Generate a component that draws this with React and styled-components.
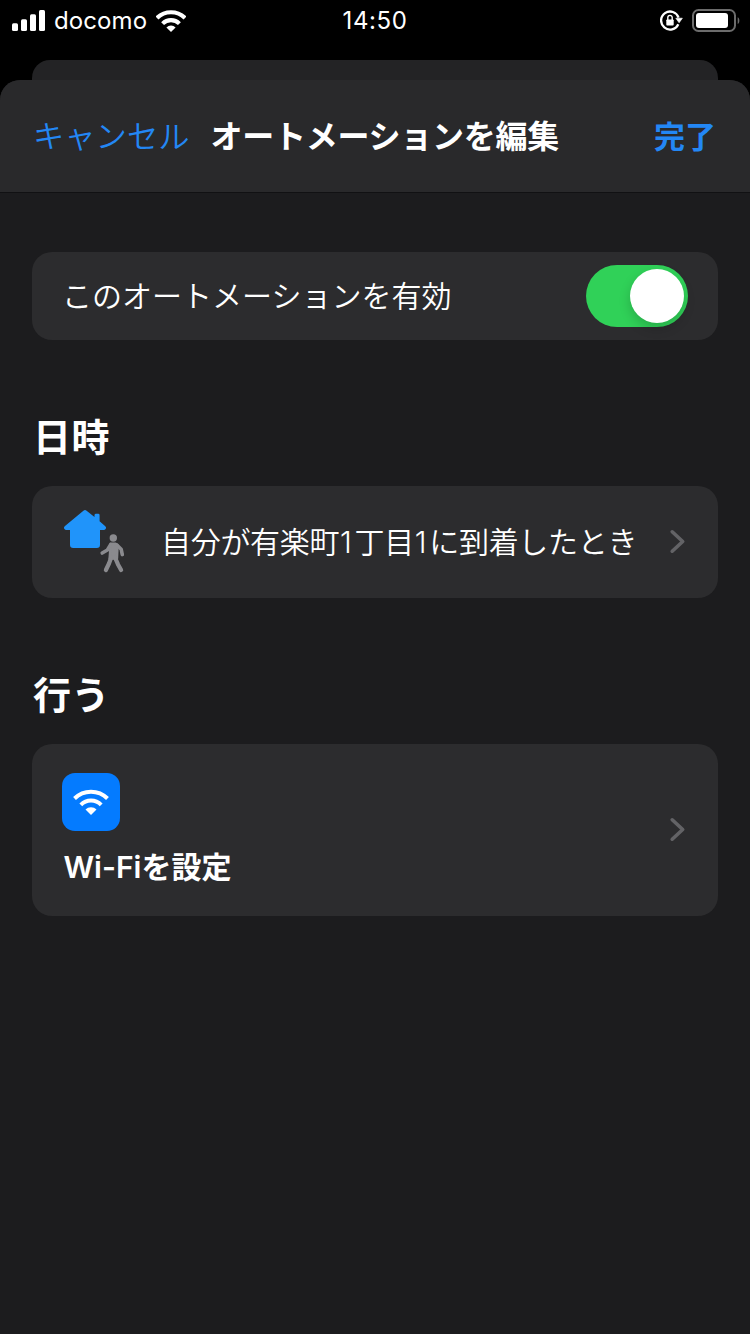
import React from "react";
import styled, { createGlobalStyle } from "styled-components";

const GlobalStyle = createGlobalStyle`
  * { box-sizing: border-box; }
  html, body { margin: 0; background: #000; }
  body { font-family: Inter, "Noto Sans CJK JP", sans-serif; color: #fff; }
`;

const Screen = styled.div`
  width: 750px;
  height: 1334px;
  display: flex;
  flex-direction: column;
  background: #000;
  overflow: hidden;
`;

const StatusBar = styled.header`
  height: 60px;
  padding: 0 10px 20px 12px;
  display: grid;
  grid-template-columns: 1fr auto 1fr;
  align-items: center;
  font-size: 24px;
  line-height: 40px;
`;

const StatusGroup = styled.div`
  display: flex;
  align-items: center;
  justify-content: ${(p) => (p.$end ? "flex-end" : "flex-start")};
  gap: ${(p) => p.$gap}px;
`;

const Carrier = styled.span`
  padding-top: 1px;
  letter-spacing: 0.1px;
  margin: 0 1px 0 1px;
`;

const Clock = styled.time`
  padding: 1px 2px 0 0;
  letter-spacing: 0.6px;
`;

const BackSheet = styled.div`
  height: 20px;
  margin: 0 32px;
  border-radius: 18px 18px 0 0;
  background: #232325;
  flex: none;
`;

const Sheet = styled.main`
  flex: 1;
  border-radius: 20px 20px 0 0;
  background: #1c1c1e;
  overflow: hidden;
`;

const NavBar = styled.nav`
  height: 113px;
  display: flex;
  align-items: center;
  padding: 2px 34px 0 33px;
  background: #29292b;
  border-bottom: 1px solid #111113;
`;

const NavButton = styled.button`
  all: unset;
  color: #2387f5;
  font-size: ${(p) => (p.$strong ? 31 : 31.3)}px;
  font-weight: ${(p) => (p.$strong ? 700 : 350)};
  line-height: 40px;
  white-space: nowrap;
`;

const Title = styled.h1`
  margin: 0 auto 0 21px;
  font-size: 32px;
  line-height: 40px;
  letter-spacing: -0.25px;
  font-weight: 700;
  white-space: nowrap;
`;

const Content = styled.div`
  padding: 59px 32px 0;
`;

const Card = styled.section`
  height: ${(p) => p.$height}px;
  padding: 0 ${(p) => p.$right ?? 32}px 0 30px;
  display: flex;
  align-items: center;
  border-radius: 20px;
  background: #2c2c2e;
`;

const Label = styled.span`
  flex: 1;
  font-size: 30px;
  font-weight: 350;
  line-height: 40px;
  white-space: nowrap;
  letter-spacing: ${(p) => p.$tracking ?? 0}px;
`;

const Digit = styled.span`
  margin: 0 3px 0 0.8px;
`;

const Heading = styled.h2`
  margin: 74px 0 25px 1px;
  font-size: 38px;
  font-weight: 700;
  line-height: 47px;
  letter-spacing: 0.4px;
`;

const Switch = styled.div`
  width: 102px;
  height: 62px;
  padding: 4px;
  display: flex;
  justify-content: flex-end;
  border-radius: 31px;
  background: #30d158;
`;

const Knob = styled.div`
  width: 54px;
  height: 54px;
  border-radius: 50%;
  background: #fff;
  box-shadow: 0 5px 12px rgba(0, 0, 0, 0.18);
`;

const TriggerIcon = styled.svg`
  width: 62px;
  height: 64px;
  margin: 0 36px 2px 1px;
  flex: none;
`;

const Action = styled.div`
  flex: 1;
  display: flex;
  flex-direction: column;
  align-items: flex-start;
  gap: 16px;
`;

const AppTile = styled.div`
  width: 58px;
  height: 58px;
  display: flex;
  align-items: center;
  justify-content: center;
  border-radius: 13px;
  background: #047bff;
`;

const ActionName = styled.span`
  padding-left: 1.5px;
  font-size: 30px;
  font-weight: 600;
  line-height: 40px;
  white-space: nowrap;
`;

function Signal() {
  return (
    <svg width="33" height="22" viewBox="0 0 33 22" fill="#fff">
      <rect x="0" y="13.2" width="6" height="7.8" rx="1.5" />
      <rect x="9" y="9.2" width="6" height="11.8" rx="1.5" />
      <rect x="18" y="4.2" width="6" height="16.8" rx="1.5" />
      <rect x="27" y="0" width="6" height="21" rx="1.5" />
    </svg>
  );
}

function Wifi({ width, height, radii, thickness }) {
  const cx = width / 2;
  const k = Math.SQRT1_2;
  const cy = height;
  const arc = (r) => `M${cx - r * k} ${cy - r * k}A${r} ${r} 0 0 1 ${cx + r * k} ${cy - r * k}`;
  return (
    <svg width={width} height={height} viewBox={`0 0 ${width} ${height}`}>
      <g fill="none" stroke="#fff" strokeWidth={thickness}>
        <path d={arc(radii[0])} />
        <path d={arc(radii[1])} />
      </g>
      <path d={`${arc(radii[2])}L${cx} ${cy}Z`} fill="#fff" />
    </svg>
  );
}

function RotationLock() {
  return (
    <svg width="23" height="22" viewBox="0 0 23 22">
      <path d="M18.3 14.2A9 9 0 1 1 18.6 7.6" fill="none" stroke="#fff" strokeWidth="2.3" />
      <path d="M15.8 8.2h6.6l-3.3 4.6z" fill="#fff" stroke="#fff" strokeWidth="0.6" strokeLinejoin="round" />
      <rect x="6.3" y="9.4" width="7.4" height="6" rx="0.9" fill="#fff" />
      <path d="M7.8 10V7.6a2.2 2.2 0 0 1 4.4 0V10" fill="none" stroke="#fff" strokeWidth="1.4" />
    </svg>
  );
}

function Battery() {
  return (
    <svg width="48" height="24" viewBox="0 0 48 24">
      <rect x="1" y="1" width="42" height="21" rx="5.5" fill="none" stroke="#6c6c6c" strokeWidth="2" />
      <rect x="4" y="4" width="32" height="15" rx="3" fill="#fff" />
      <path d="M45.7 8.2c2.2 1 2.2 5.8 0 6.8z" fill="#6c6c6c" />
    </svg>
  );
}

function Chevron() {
  return (
    <svg width="17" height="26" viewBox="0 0 17 26">
      <path d="M3.2 2.8 13.7 12.5 3.2 22.2" fill="none" stroke="#636366" strokeWidth="3.6" strokeLinecap="round" strokeLinejoin="round" />
    </svg>
  );
}

function ArriveHome() {
  return (
    <TriggerIcon viewBox="0 0 62 64">
      <path
        fill="#2094fa"
        d="M20.4 1.7Q22 .4 23.6 1.7L31.5 8V6.2Q31.5 4.8 33 4.8h2.2Q36.6 4.8 36.6 6.2v6L42.3 17.2Q43.6 18.5 42.8 19.8 42.1 21 40.5 21H37v14.8Q37 39 33.8 39H10.2Q7 39 7 35.8V21H3.5Q1.9 21 1.2 19.8.5 18.5 1.7 17.2Z"
      />
      <g fill="#8a8a8e" stroke="#8a8a8e" strokeLinecap="round" strokeLinejoin="round">
        <circle cx="50.3" cy="29" r="3.7" stroke="none" />
        <path strokeWidth="2.4" d="M47.6 34.8h5l2 1.5-.6 13.2h-7.4l.6-8Z" />
        <path fill="none" strokeWidth="3.6" d="M47.6 35.6 44.4 41 39.2 44M53.6 35.8 58.2 40.3 59.3 45.6" />
        <path fill="none" strokeWidth="4.2" d="M48.2 48.5 46 54.5 42.9 61M52 48.5 55 55.4 58.1 61" />
      </g>
    </TriggerIcon>
  );
}

export default function App() {
  return (
    <>
      <GlobalStyle />
      <Screen>
        <StatusBar>
          <StatusGroup $gap={8}>
            <Signal />
            <Carrier>docomo</Carrier>
            <Wifi width={30} height={22} radii={[19.8, 11.9, 6.5]} thickness={4.1} />
          </StatusGroup>
          <Clock>14:50</Clock>
          <StatusGroup $end $gap={9}>
            <RotationLock />
            <Battery />
          </StatusGroup>
        </StatusBar>
        <BackSheet />
        <Sheet>
          <NavBar>
            <NavButton>キャンセル</NavButton>
            <Title>オートメーションを編集</Title>
            <NavButton $strong>完了</NavButton>
          </NavBar>
          <Content>
            <Card $height={88} $right={30}>
              <Label>このオートメーションを有効</Label>
              <Switch role="switch" aria-checked="true">
                <Knob />
              </Switch>
            </Card>
            <Heading>日時</Heading>
            <Card $height={112}>
              <ArriveHome />
              <Label $tracking={-0.3}>
                自分が有楽町<Digit>1</Digit>丁目<Digit>1</Digit>に到着したとき
              </Label>
              <Chevron />
            </Card>
            <Heading>行う</Heading>
            <Card $height={172}>
              <Action>
                <AppTile>
                  <Wifi width={36} height={26} radii={[23.3, 14.4, 7.8]} thickness={4} />
                </AppTile>
                <ActionName>Wi-Fiを設定</ActionName>
              </Action>
              <Chevron />
            </Card>
          </Content>
        </Sheet>
      </Screen>
    </>
  );
}
